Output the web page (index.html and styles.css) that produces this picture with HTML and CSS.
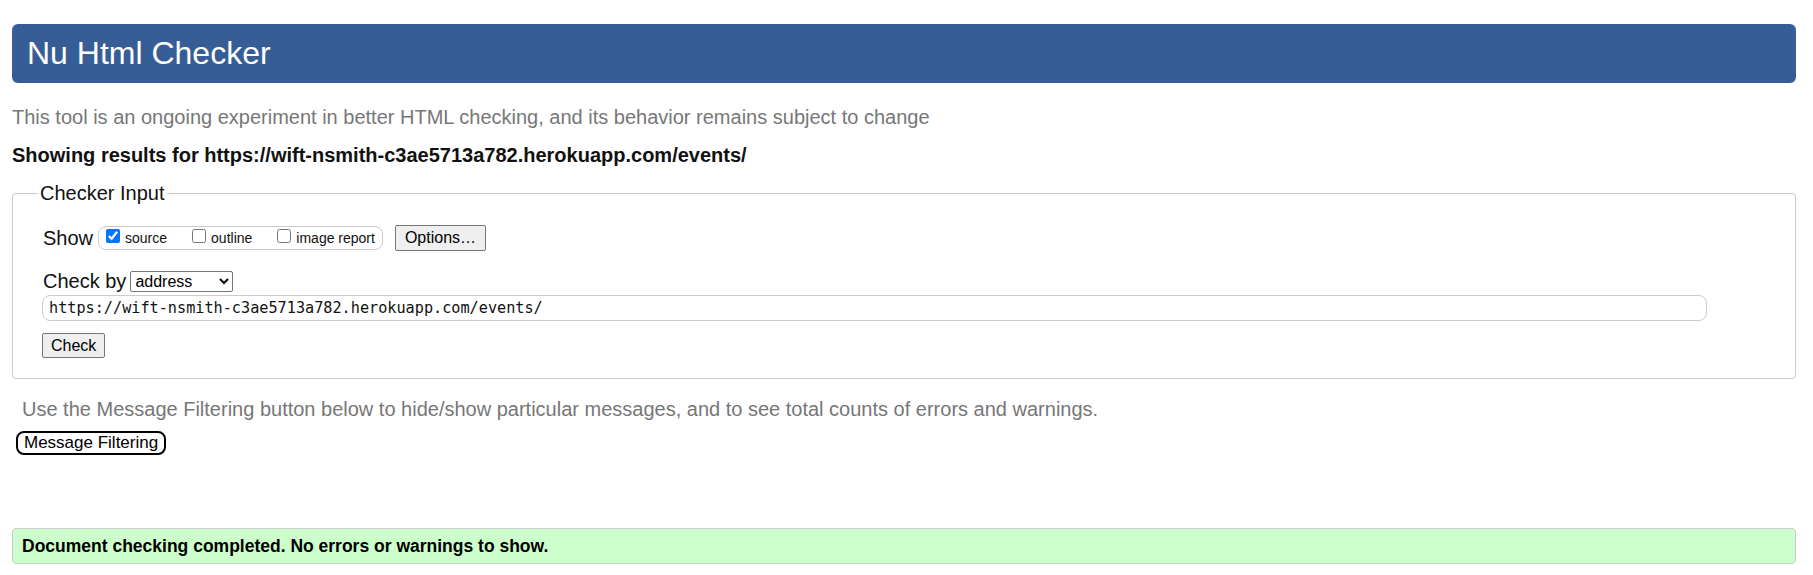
FILE: index.html
```html
<!DOCTYPE html>
<html lang="en">
<head>
<meta charset="utf-8">
<title>Nu Html Checker</title>
<link rel="stylesheet" href="styles.css">
</head>
<body>
<h1 class="title">Nu Html Checker</h1>
<p class="intro">This tool is an ongoing experiment in better HTML checking, and its behavior remains subject to change</p>
<p class="showing">Showing results for https://wift-nsmith-c3ae5713a782.herokuapp.com/events/</p>
<form class="checker-form">
  <fieldset class="input-box">
    <legend class="legend">Checker Input</legend>
    <div class="row show-row">
      <span class="row-label">Show</span>
      <span class="pill">
        <label class="opt"><input type="checkbox" class="cb" checked><span>source</span></label>
        <label class="opt"><input type="checkbox" class="cb"><span>outline</span></label>
        <label class="opt"><input type="checkbox" class="cb"><span>image report</span></label>
      </span>
      <button type="button" class="btn options-btn">Options…</button>
    </div>
    <div class="row checkby-row">
      <label class="row-label">Check by</label>
      <select class="select"><option>address</option></select>
    </div>
    <input class="url" type="text" value="https://wift-nsmith-c3ae5713a782.herokuapp.com/events/">
    <div class="row check-row">
      <button type="button" class="btn check-btn">Check</button>
    </div>
  </fieldset>
</form>
<p class="filter-note">Use the Message Filtering button below to hide/show particular messages, and to see total counts of errors and warnings.</p>
<button type="button" class="filter-btn">Message Filtering</button>
<div class="success">Document checking completed. No errors or warnings to show.</div>
</body>
</html>
```

FILE: styles.css
```css
html, body {
  background: #fff;
  color: #000;
  font-family: "Liberation Sans", Arial, sans-serif;
}
body {
  margin: 0 17px 0 12px;
}
.title {
  margin: 24px 0 0;
  height: 59px;
  box-sizing: border-box;
  padding: 0 15px;
  display: flex;
  align-items: center;
  background: #365d95;
  color: #fff;
  font-size: 32px;
  font-weight: normal;
  border-radius: 6px;
}
.intro {
  margin: 23px 0 0;
  font-size: 20px;
  line-height: 22px;
  color: #777;
}
.showing {
  margin: 16px 0 0;
  font-size: 20px;
  line-height: 22px;
  font-weight: bold;
  color: #111;
}
.checker-form {
  margin: 16px 0 0;
}
.input-box {
  margin: 0;
  padding: 21px 30px 20px;
  border: 1px solid #ccc;
  border-radius: 4px;
}
.legend {
  margin-left: -5px;
  padding: 0 2px;
  font-size: 20px;
  line-height: 22px;
  color: #111;
}
.row {
  display: flex;
  align-items: center;
}
.row-label {
  font-size: 20px;
  color: #111;
}
.show-row {
  height: 26px;
}
.pill {
  display: flex;
  align-items: center;
  height: 24px;
  box-sizing: border-box;
  margin-left: 5px;
  padding: 0 7px 0 7px;
  border: 1px solid #ccc;
  border-radius: 8px;
  gap: 25px;
}
.opt {
  display: flex;
  align-items: center;
  gap: 5px;
  font-size: 14px;
  color: #111;
}
.cb {
  margin: 0 0 4px;
  width: 14px;
  height: 14px;
}
.btn {
  font-family: "Liberation Sans", Arial, sans-serif;
  font-size: 16px;
  line-height: 18px;
  padding: 3px 8px;
  background: #efefef;
  border: 1px solid #767676;
  border-radius: 2px;
  color: #000;
}
.options-btn {
  margin-left: 12px;
  height: 26px;
  padding: 0 9px;
}
.checkby-row {
  margin-top: 19px;
  height: 22px;
}
.select {
  margin-left: 4px;
  width: 103px;
  height: 21px;
  font-family: "Liberation Sans", Arial, sans-serif;
  font-size: 16px;
  border: 1px solid #767676;
  border-radius: 2px;
  background: #fff;
  color: #000;
}
.url {
  display: block;
  margin: 3px 0 0 -1px;
  width: calc(100% - 57px);
  height: 26px;
  box-sizing: border-box;
  padding: 0 6px;
  border: 1px solid #ccc;
  border-radius: 8px;
  font-family: "DejaVu Sans Mono", "Liberation Mono", monospace;
  font-size: 15.2px;
  color: #111;
}
.check-row {
  margin-top: 12px;
}
.check-btn {
  margin-left: -1px;
  height: 25px;
  padding: 0 8px;
}
.filter-note {
  margin: 19px 0 0;
  padding-left: 10px;
  font-size: 20px;
  line-height: 22px;
  color: #777;
}
.filter-btn {
  display: block;
  margin: 11px 0 0 4px;
  height: 24px;
  padding: 0 6px;
  font-family: "Liberation Sans", Arial, sans-serif;
  font-size: 17px;
  background: #fff;
  color: #000;
  border: 2px solid #000;
  border-radius: 8px;
}
.success {
  margin-top: 73px;
  height: 36px;
  box-sizing: border-box;
  display: flex;
  align-items: center;
  padding: 0 9px;
  background: #cfc;
  border: 1px solid #ccc;
  border-radius: 4px;
  font-size: 17.5px;
  font-weight: bold;
  color: #000;
}
```
